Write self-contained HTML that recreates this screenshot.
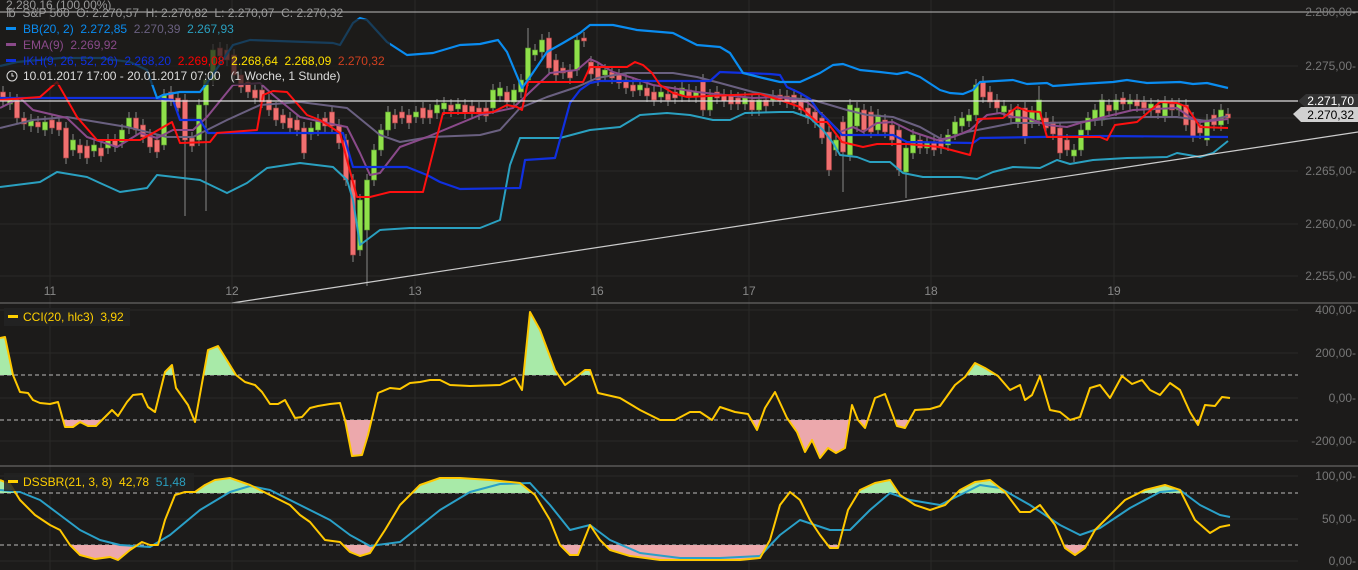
<!DOCTYPE html>
<html><head><meta charset="utf-8">
<style>
html,body{margin:0;padding:0;background:#1c1b1a;width:1358px;height:570px;overflow:hidden;}
svg{display:block;font-family:"Liberation Sans",sans-serif;}
text{white-space:pre;}
.g{fill:#8fe04a;stroke:#5a9a30;stroke-width:.6}
.r{fill:#f07070;stroke:#a04040;stroke-width:.6}
</style></head>
<body>
<svg width="1358" height="570" viewBox="0 0 1358 570" xmlns="http://www.w3.org/2000/svg">
<defs>
<clipPath id="ca"><rect x="0" y="303" width="1300" height="72"/></clipPath>
<clipPath id="cb"><rect x="0" y="420" width="1300" height="46"/></clipPath>
<clipPath id="da"><rect x="0" y="466" width="1300" height="27"/></clipPath>
<clipPath id="db"><rect x="0" y="545" width="1300" height="25"/></clipPath>
</defs>
<rect width="1358" height="570" fill="#1c1b1a"/>
<g stroke="#2a2928" stroke-width="1">
<line x1="50" y1="0" x2="50" y2="570"/><line x1="232" y1="0" x2="232" y2="570"/><line x1="415" y1="0" x2="415" y2="570"/><line x1="597" y1="0" x2="597" y2="570"/><line x1="749" y1="0" x2="749" y2="570"/><line x1="931" y1="0" x2="931" y2="570"/><line x1="1114" y1="0" x2="1114" y2="570"/>
<line x1="0" y1="66" x2="1298" y2="66"/><line x1="0" y1="118" x2="1298" y2="118"/><line x1="0" y1="171" x2="1298" y2="171"/><line x1="0" y1="224" x2="1298" y2="224"/><line x1="0" y1="276" x2="1298" y2="276"/>
<line x1="0" y1="310" x2="1298" y2="310"/><line x1="0" y1="353" x2="1298" y2="353"/><line x1="0" y1="398" x2="1298" y2="398"/><line x1="0" y1="441" x2="1298" y2="441"/>
<line x1="0" y1="476" x2="1298" y2="476"/><line x1="0" y1="519" x2="1298" y2="519"/><line x1="0" y1="561" x2="1298" y2="561"/>
</g>
<line x1="0" y1="12" x2="1358" y2="12" stroke="#bbb" stroke-width="1"/>

<path stroke="#888" stroke-width="1" fill="none" d="M3,86V106M10,92V110M17,94V124M24,112V130M31,114V132M38,116V133M45,116V136M52,114V134M59,116V136M66,122V164M73,134V156M80,139V159M87,140V164M94,139V157M101,142V162M108,134V154M115,134V152M122,124V148M129,112V134M136,112V136M143,119V143M150,129V153M157,134V158M164,89V150M171,86V106M178,92V114M185,94V216M192,132V152M199,99V146M206,74V211M213,44V86M220,42V62M227,44V66M234,49V81M241,69V93M248,76V98M255,84V104M262,84V108M269,94V116M276,102V126M283,109V129M290,112V134M297,114V136M304,122V159M311,122V140M318,114V136M325,112V132M332,106V132M339,119V149M346,134V186M353,174V262M360,194V256M367,174V286M374,144V186M381,124V156M388,106V136M395,109V129M402,106V124M409,109V129M416,106V123M423,102V124M430,104V124M437,99V119M444,97V115M451,99V117M458,98V115M465,99V119M472,100V118M479,102V120M486,102V122M493,84V114M500,82V102M507,86V108M514,84V108M521,74V98M528,28V86M535,44V61M542,34V58M549,32V74M556,54V81M563,62V79M570,64V84M577,34V76M584,32V47M591,56V80M598,62V86M605,64V81M612,66V84M619,69V89M626,74V94M633,79V97M640,79V96M647,82V102M654,86V106M661,86V103M668,88V106M675,86V104M682,82V102M689,84V102M696,86V103M703,74V116M710,89V116M717,86V104M724,89V107M731,90V110M738,92V110M745,92V110M752,94V116M759,94V116M766,94V112M773,90V106M780,89V105M787,90V108M794,89V109M801,94V116M808,102V124M815,106V128M822,112V144M829,126V176M836,134V156M843,116V192M850,99V161M857,102V132M864,104V136M871,106V138M878,109V136M885,114V138M892,119V146M899,124V176M906,142V198M913,129V159M920,134V154M927,136V154M934,136V156M941,134V154M948,129V151M955,116V140M962,112V132M969,109V127M976,79V121M983,76V103M990,86V108M997,94V114M1004,100V118M1011,104V124M1018,104V128M1025,102V144M1032,106V128M1039,86V126M1046,112V134M1053,116V140M1060,122V159M1067,134V156M1074,144V162M1081,124V156M1088,112V136M1095,104V126M1102,94V126M1109,99V117M1116,94V116M1123,92V110M1130,94V110M1137,94V112M1144,96V114M1151,98V116M1158,99V119M1165,96V122M1172,98V116M1179,98V116M1186,99V131M1193,112V142M1200,119V139M1207,114V146M1214,109V131M1221,104V131M1228,108V124"/>
<g>
<rect class="r" x="0.5" y="92" width="5" height="8"/><rect class="g" x="7.5" y="98" width="5" height="6"/><rect class="r" x="14.5" y="100" width="5" height="18"/><rect class="r" x="21.5" y="118" width="5" height="6"/><rect class="g" x="28.5" y="120" width="5" height="6"/><rect class="r" x="35.5" y="122" width="5" height="5"/><rect class="g" x="42.5" y="122" width="5" height="8"/><rect class="r" x="49.5" y="120" width="5" height="8"/><rect class="r" x="56.5" y="122" width="5" height="8"/><rect class="r" x="63.5" y="128" width="5" height="30"/><rect class="g" x="70.5" y="140" width="5" height="10"/><rect class="r" x="77.5" y="145" width="5" height="8"/><rect class="r" x="84.5" y="146" width="5" height="12"/><rect class="g" x="91.5" y="145" width="5" height="6"/><rect class="r" x="98.5" y="148" width="5" height="8"/><rect class="g" x="105.5" y="140" width="5" height="8"/><rect class="r" x="112.5" y="140" width="5" height="6"/><rect class="g" x="119.5" y="130" width="5" height="12"/><rect class="g" x="126.5" y="118" width="5" height="10"/><rect class="r" x="133.5" y="118" width="5" height="12"/><rect class="r" x="140.5" y="125" width="5" height="12"/><rect class="r" x="147.5" y="135" width="5" height="12"/><rect class="r" x="154.5" y="140" width="5" height="12"/><rect class="g" x="161.5" y="95" width="5" height="50"/><rect class="r" x="168.5" y="92" width="5" height="8"/><rect class="r" x="175.5" y="98" width="5" height="10"/><rect class="r" x="182.5" y="100" width="5" height="40"/><rect class="r" x="189.5" y="138" width="5" height="8"/><rect class="g" x="196.5" y="105" width="5" height="35"/><rect class="g" x="203.5" y="80" width="5" height="25"/><rect class="g" x="210.5" y="50" width="5" height="30"/><rect class="r" x="217.5" y="48" width="5" height="8"/><rect class="r" x="224.5" y="50" width="5" height="10"/><rect class="r" x="231.5" y="55" width="5" height="20"/><rect class="r" x="238.5" y="75" width="5" height="12"/><rect class="r" x="245.5" y="82" width="5" height="10"/><rect class="r" x="252.5" y="90" width="5" height="8"/><rect class="r" x="259.5" y="90" width="5" height="12"/><rect class="r" x="266.5" y="100" width="5" height="10"/><rect class="r" x="273.5" y="108" width="5" height="12"/><rect class="r" x="280.5" y="115" width="5" height="8"/><rect class="r" x="287.5" y="118" width="5" height="10"/><rect class="r" x="294.5" y="120" width="5" height="10"/><rect class="r" x="301.5" y="128" width="5" height="25"/><rect class="g" x="308.5" y="128" width="5" height="6"/><rect class="g" x="315.5" y="120" width="5" height="10"/><rect class="r" x="322.5" y="118" width="5" height="8"/><rect class="r" x="329.5" y="112" width="5" height="14"/><rect class="r" x="336.5" y="125" width="5" height="18"/><rect class="r" x="343.5" y="140" width="5" height="40"/><rect class="r" x="350.5" y="180" width="5" height="75"/><rect class="g" x="357.5" y="200" width="5" height="50"/><rect class="g" x="364.5" y="180" width="5" height="50"/><rect class="g" x="371.5" y="150" width="5" height="30"/><rect class="g" x="378.5" y="130" width="5" height="20"/><rect class="g" x="385.5" y="112" width="5" height="18"/><rect class="r" x="392.5" y="115" width="5" height="8"/><rect class="r" x="399.5" y="112" width="5" height="6"/><rect class="r" x="406.5" y="115" width="5" height="8"/><rect class="g" x="413.5" y="112" width="5" height="5"/><rect class="r" x="420.5" y="108" width="5" height="10"/><rect class="r" x="427.5" y="110" width="5" height="8"/><rect class="g" x="434.5" y="105" width="5" height="8"/><rect class="g" x="441.5" y="103" width="5" height="6"/><rect class="r" x="448.5" y="105" width="5" height="6"/><rect class="g" x="455.5" y="104" width="5" height="5"/><rect class="r" x="462.5" y="105" width="5" height="8"/><rect class="r" x="469.5" y="106" width="5" height="6"/><rect class="r" x="476.5" y="108" width="5" height="6"/><rect class="r" x="483.5" y="108" width="5" height="8"/><rect class="g" x="490.5" y="90" width="5" height="18"/><rect class="g" x="497.5" y="88" width="5" height="8"/><rect class="r" x="504.5" y="92" width="5" height="10"/><rect class="g" x="511.5" y="90" width="5" height="12"/><rect class="g" x="518.5" y="80" width="5" height="12"/><rect class="g" x="525.5" y="48" width="5" height="32"/><rect class="g" x="532.5" y="50" width="5" height="5"/><rect class="g" x="539.5" y="40" width="5" height="12"/><rect class="r" x="546.5" y="38" width="5" height="30"/><rect class="r" x="553.5" y="60" width="5" height="15"/><rect class="r" x="560.5" y="68" width="5" height="5"/><rect class="r" x="567.5" y="70" width="5" height="8"/><rect class="g" x="574.5" y="40" width="5" height="30"/><rect class="r" x="581.5" y="38" width="5" height="3"/><rect class="r" x="588.5" y="62" width="5" height="12"/><rect class="r" x="595.5" y="68" width="5" height="12"/><rect class="g" x="602.5" y="70" width="5" height="5"/><rect class="r" x="609.5" y="72" width="5" height="6"/><rect class="r" x="616.5" y="75" width="5" height="8"/><rect class="r" x="623.5" y="80" width="5" height="8"/><rect class="r" x="630.5" y="85" width="5" height="6"/><rect class="g" x="637.5" y="85" width="5" height="5"/><rect class="r" x="644.5" y="88" width="5" height="8"/><rect class="r" x="651.5" y="92" width="5" height="8"/><rect class="g" x="658.5" y="92" width="5" height="5"/><rect class="r" x="665.5" y="94" width="5" height="6"/><rect class="r" x="672.5" y="92" width="5" height="6"/><rect class="g" x="679.5" y="88" width="5" height="8"/><rect class="r" x="686.5" y="90" width="5" height="6"/><rect class="g" x="693.5" y="92" width="5" height="5"/><rect class="r" x="700.5" y="80" width="5" height="30"/><rect class="g" x="707.5" y="95" width="5" height="15"/><rect class="r" x="714.5" y="92" width="5" height="6"/><rect class="r" x="721.5" y="95" width="5" height="6"/><rect class="r" x="728.5" y="96" width="5" height="8"/><rect class="r" x="735.5" y="98" width="5" height="6"/><rect class="g" x="742.5" y="98" width="5" height="6"/><rect class="r" x="749.5" y="100" width="5" height="10"/><rect class="g" x="756.5" y="100" width="5" height="10"/><rect class="r" x="763.5" y="100" width="5" height="6"/><rect class="g" x="770.5" y="96" width="5" height="4"/><rect class="r" x="777.5" y="95" width="5" height="4"/><rect class="r" x="784.5" y="96" width="5" height="6"/><rect class="r" x="791.5" y="95" width="5" height="8"/><rect class="r" x="798.5" y="100" width="5" height="10"/><rect class="r" x="805.5" y="108" width="5" height="10"/><rect class="r" x="812.5" y="112" width="5" height="10"/><rect class="r" x="819.5" y="118" width="5" height="20"/><rect class="r" x="826.5" y="132" width="5" height="38"/><rect class="g" x="833.5" y="140" width="5" height="10"/><rect class="r" x="840.5" y="122" width="5" height="30"/><rect class="g" x="847.5" y="105" width="5" height="50"/><rect class="g" x="854.5" y="108" width="5" height="18"/><rect class="r" x="861.5" y="110" width="5" height="20"/><rect class="r" x="868.5" y="112" width="5" height="20"/><rect class="g" x="875.5" y="115" width="5" height="15"/><rect class="r" x="882.5" y="120" width="5" height="12"/><rect class="r" x="889.5" y="125" width="5" height="15"/><rect class="r" x="896.5" y="130" width="5" height="40"/><rect class="g" x="903.5" y="148" width="5" height="24"/><rect class="g" x="910.5" y="135" width="5" height="18"/><rect class="r" x="917.5" y="140" width="5" height="8"/><rect class="g" x="924.5" y="142" width="5" height="6"/><rect class="r" x="931.5" y="142" width="5" height="8"/><rect class="r" x="938.5" y="140" width="5" height="8"/><rect class="g" x="945.5" y="135" width="5" height="10"/><rect class="g" x="952.5" y="122" width="5" height="12"/><rect class="g" x="959.5" y="118" width="5" height="8"/><rect class="g" x="966.5" y="115" width="5" height="6"/><rect class="g" x="973.5" y="85" width="5" height="30"/><rect class="r" x="980.5" y="82" width="5" height="15"/><rect class="r" x="987.5" y="92" width="5" height="10"/><rect class="r" x="994.5" y="100" width="5" height="8"/><rect class="g" x="1001.5" y="106" width="5" height="6"/><rect class="r" x="1008.5" y="110" width="5" height="8"/><rect class="g" x="1015.5" y="110" width="5" height="12"/><rect class="r" x="1022.5" y="108" width="5" height="30"/><rect class="g" x="1029.5" y="112" width="5" height="10"/><rect class="g" x="1036.5" y="100" width="5" height="20"/><rect class="r" x="1043.5" y="118" width="5" height="10"/><rect class="r" x="1050.5" y="122" width="5" height="12"/><rect class="r" x="1057.5" y="128" width="5" height="25"/><rect class="r" x="1064.5" y="140" width="5" height="10"/><rect class="g" x="1071.5" y="150" width="5" height="6"/><rect class="g" x="1078.5" y="130" width="5" height="20"/><rect class="g" x="1085.5" y="118" width="5" height="12"/><rect class="g" x="1092.5" y="110" width="5" height="10"/><rect class="g" x="1099.5" y="100" width="5" height="20"/><rect class="r" x="1106.5" y="105" width="5" height="6"/><rect class="g" x="1113.5" y="100" width="5" height="10"/><rect class="r" x="1120.5" y="98" width="5" height="6"/><rect class="g" x="1127.5" y="100" width="5" height="4"/><rect class="r" x="1134.5" y="100" width="5" height="6"/><rect class="r" x="1141.5" y="102" width="5" height="6"/><rect class="g" x="1148.5" y="104" width="5" height="6"/><rect class="r" x="1155.5" y="105" width="5" height="8"/><rect class="g" x="1162.5" y="102" width="5" height="14"/><rect class="r" x="1169.5" y="104" width="5" height="6"/><rect class="g" x="1176.5" y="104" width="5" height="6"/><rect class="r" x="1183.5" y="105" width="5" height="20"/><rect class="r" x="1190.5" y="118" width="5" height="18"/><rect class="r" x="1197.5" y="125" width="5" height="8"/><rect class="g" x="1204.5" y="120" width="5" height="20"/><rect class="r" x="1211.5" y="115" width="5" height="10"/><rect class="g" x="1218.5" y="110" width="5" height="15"/><rect class="r" x="1225.5" y="114" width="5" height="4"/>
</g>

<g fill="none" stroke-linejoin="round">
<polyline stroke="#2aa0c0" stroke-width="2" points="0,187 40,182 57,172 87,177 100,183 120,192 147,188 157,175 200,180 227,193 247,183 267,168 300,163 333,167 347,180 353,200 360,245 380,230 410,228 480,228 500,220 510,165 520,138 560,138 590,130 620,127 640,115 667,113 690,115 713,120 730,120 745,113 780,112 793,112 810,118 823,130 833,143 840,155 857,157 870,162 890,162 903,173 923,177 960,177 977,179 993,172 1013,167 1040,168 1057,160 1070,164 1093,160 1127,158 1167,157 1177,153 1200,157 1213,153 1228,141"/>
<polyline stroke="#6a6080" stroke-width="2" points="0,128 33,120 67,117 127,127 167,137 193,137 227,120 260,105 300,102 347,108 380,135 400,142 430,137 480,135 500,130 520,108 547,97 577,87 597,78 627,73 673,73 697,77 720,83 753,92 780,97 813,100 847,110 867,115 893,117 920,127 943,140 967,132 993,127 1013,123 1047,123 1080,122 1113,118 1147,117 1177,117 1207,121 1228,116"/>
<polyline stroke="#8a4a8a" stroke-width="2" points="0,108 20,98 33,110 67,118 87,137 117,147 140,133 157,138 173,130 193,130 207,117 233,85 260,83 273,95 300,117 327,123 347,127 360,153 370,175 380,173 400,147 427,137 480,115 513,108 530,92 550,73 577,70 590,59 597,62 613,72 633,78 653,85 697,92 753,98 780,97 807,102 823,115 840,132 853,127 863,132 877,123 893,122 913,132 937,140 953,137 970,130 987,115 1000,113 1013,117 1027,118 1047,125 1067,127 1080,123 1100,118 1133,110 1177,108 1190,117 1200,122 1228,119"/>
<polyline stroke="#1030e0" stroke-width="2.2" points="0,98 153,98 173,100 180,120 200,120 208,133 343,133 353,167 407,167 427,175 440,182 460,189 520,188 525,160 555,158 570,103 580,90 590,83 600,81 710,81 720,72 770,74 780,75 787,87 800,93 810,99 820,113 830,122 842,135 893,135 907,142 973,143 980,138 1100,136 1228,137"/>
<polyline stroke="#ff1010" stroke-width="2" points="0,100 40,97 57,82 77,117 97,140 140,140 153,133 172,122 180,143 210,142 217,133 257,130 263,95 273,91 287,92 307,115 320,120 340,133 347,160 357,197 370,197 390,192 423,192 443,113 480,113 493,112 507,105 517,107 522,110 528,82 583,82 590,67 627,67 635,62 643,65 652,73 660,85 673,93 687,97 733,95 760,94 780,100 800,107 817,122 827,122 842,142 863,147 877,144 907,144 940,147 970,155 978,119 1003,118 1017,107 1027,111 1040,112 1047,137 1100,137 1107,140 1115,125 1137,122 1160,102 1177,103 1187,107 1200,127 1228,128"/>
<polyline stroke="#0a8cf0" stroke-width="2.2" points="0,66 17,62 60,58 100,58 130,62 147,70 157,98 163,95 180,92 200,92 207,83 233,45 250,40 333,43 340,45 353,23 360,18 367,20 387,42 407,55 433,53 460,45 480,44 498,40 507,52 522,88 530,77 547,52 563,43 580,33 590,25 613,25 637,30 673,33 697,45 720,47 730,53 743,73 763,78 780,82 800,82 820,73 833,65 843,64 860,70 880,72 897,74 907,72 920,77 940,90 950,93 963,94 973,90 980,82 1013,80 1027,84 1047,83 1053,86 1080,84 1113,82 1127,80 1147,83 1180,82 1193,84 1207,83 1228,88"/>
</g>

<line x1="0" y1="101" x2="1298" y2="101" stroke="#ddd" stroke-width="1.2"/>
<line x1="232" y1="303" x2="1358" y2="132" stroke="#ccc" stroke-width="1.2"/>
<g fill="#888" font-size="12" text-anchor="middle">
<text x="50" y="295">11</text><text x="232" y="295">12</text><text x="415" y="295">13</text><text x="597" y="295">16</text><text x="749" y="295">17</text><text x="931" y="295">18</text><text x="1114" y="295">19</text>
</g>
<line x1="0" y1="303" x2="1358" y2="303" stroke="#777"/>
<line x1="0" y1="466" x2="1358" y2="466" stroke="#777"/>
<g stroke="#bbb" stroke-dasharray="4,3" stroke-width="1">
<line x1="0" y1="375" x2="1298" y2="375"/><line x1="0" y1="420" x2="1298" y2="420"/>
<line x1="0" y1="493" x2="1298" y2="493"/><line x1="0" y1="545" x2="1298" y2="545"/>
</g>

<path clip-path="url(#ca)" fill="#a8eaa8" d="M0,375 L0,338 5,337 13,375 20,392 28,393 33,400 40,403 50,404 58,402 65,427 73,427 80,422 88,426 96,426 105,417 112,410 118,416 127,402 133,395 142,394 148,407 155,412 165,372 172,365 176,388 188,405 195,422 208,350 218,346 228,362 236,375 245,382 255,385 262,392 270,404 278,404 285,400 295,418 302,417 310,408 318,406 330,404 340,403 345,420 352,456 362,455 368,435 378,393 390,388 400,389 410,383 420,382 430,380 440,380 450,385 470,386 500,385 515,378 522,390 530,312 540,330 555,370 565,385 575,378 585,370 590,370 598,393 620,398 640,410 660,420 675,420 690,412 700,412 712,420 720,407 735,412 748,414 757,430 765,408 775,392 787,418 797,432 805,452 812,440 820,458 828,448 836,453 845,448 852,405 858,420 865,428 875,398 885,394 897,426 905,428 915,410 930,409 940,406 955,385 965,377 975,363 985,368 998,376 1010,390 1020,385 1025,400 1032,395 1040,376 1050,410 1060,412 1070,420 1080,417 1090,388 1100,385 1110,398 1122,376 1132,384 1142,380 1150,390 1160,395 1170,383 1180,390 1190,412 1198,425 1205,405 1215,406 1222,397 1230,398 L1230,375Z"/>
<path clip-path="url(#cb)" fill="#eca8ac" d="M0,420 L0,338 5,337 13,375 20,392 28,393 33,400 40,403 50,404 58,402 65,427 73,427 80,422 88,426 96,426 105,417 112,410 118,416 127,402 133,395 142,394 148,407 155,412 165,372 172,365 176,388 188,405 195,422 208,350 218,346 228,362 236,375 245,382 255,385 262,392 270,404 278,404 285,400 295,418 302,417 310,408 318,406 330,404 340,403 345,420 352,456 362,455 368,435 378,393 390,388 400,389 410,383 420,382 430,380 440,380 450,385 470,386 500,385 515,378 522,390 530,312 540,330 555,370 565,385 575,378 585,370 590,370 598,393 620,398 640,410 660,420 675,420 690,412 700,412 712,420 720,407 735,412 748,414 757,430 765,408 775,392 787,418 797,432 805,452 812,440 820,458 828,448 836,453 845,448 852,405 858,420 865,428 875,398 885,394 897,426 905,428 915,410 930,409 940,406 955,385 965,377 975,363 985,368 998,376 1010,390 1020,385 1025,400 1032,395 1040,376 1050,410 1060,412 1070,420 1080,417 1090,388 1100,385 1110,398 1122,376 1132,384 1142,380 1150,390 1160,395 1170,383 1180,390 1190,412 1198,425 1205,405 1215,406 1222,397 1230,398 L1230,420Z"/>
<polyline fill="none" stroke="#ffc800" stroke-width="2" stroke-linejoin="round" points="0,338 5,337 13,375 20,392 28,393 33,400 40,403 50,404 58,402 65,427 73,427 80,422 88,426 96,426 105,417 112,410 118,416 127,402 133,395 142,394 148,407 155,412 165,372 172,365 176,388 188,405 195,422 208,350 218,346 228,362 236,375 245,382 255,385 262,392 270,404 278,404 285,400 295,418 302,417 310,408 318,406 330,404 340,403 345,420 352,456 362,455 368,435 378,393 390,388 400,389 410,383 420,382 430,380 440,380 450,385 470,386 500,385 515,378 522,390 530,312 540,330 555,370 565,385 575,378 585,370 590,370 598,393 620,398 640,410 660,420 675,420 690,412 700,412 712,420 720,407 735,412 748,414 757,430 765,408 775,392 787,418 797,432 805,452 812,440 820,458 828,448 836,453 845,448 852,405 858,420 865,428 875,398 885,394 897,426 905,428 915,410 930,409 940,406 955,385 965,377 975,363 985,368 998,376 1010,390 1020,385 1025,400 1032,395 1040,376 1050,410 1060,412 1070,420 1080,417 1090,388 1100,385 1110,398 1122,376 1132,384 1142,380 1150,390 1160,395 1170,383 1180,390 1190,412 1198,425 1205,405 1215,406 1222,397 1230,398"/>

<path clip-path="url(#da)" fill="#a8eaa8" d="M0,493 L0,480 10,484 20,500 35,515 50,525 60,530 70,545 80,555 95,559 110,557 118,560 130,550 142,542 150,545 158,545 165,520 175,495 185,492 195,492 205,485 215,480 230,478 250,485 270,495 290,505 300,515 310,522 325,540 340,542 350,552 360,556 370,553 385,530 400,505 420,485 440,478 460,478 490,480 520,483 535,495 550,520 560,545 570,555 578,555 590,525 600,540 610,550 630,556 660,560 700,560 740,560 760,558 770,540 780,505 790,492 800,500 810,520 820,535 830,548 838,548 848,510 860,490 875,483 890,480 900,495 915,505 930,510 945,505 960,490 975,482 990,480 1005,492 1020,512 1030,512 1040,505 1055,525 1065,548 1075,555 1085,548 1095,530 1110,515 1125,500 1145,490 1165,485 1180,490 1195,520 1210,533 1220,527 1230,525 L1230,493Z"/>
<path clip-path="url(#db)" fill="#eca8ac" d="M0,545 L0,480 10,484 20,500 35,515 50,525 60,530 70,545 80,555 95,559 110,557 118,560 130,550 142,542 150,545 158,545 165,520 175,495 185,492 195,492 205,485 215,480 230,478 250,485 270,495 290,505 300,515 310,522 325,540 340,542 350,552 360,556 370,553 385,530 400,505 420,485 440,478 460,478 490,480 520,483 535,495 550,520 560,545 570,555 578,555 590,525 600,540 610,550 630,556 660,560 700,560 740,560 760,558 770,540 780,505 790,492 800,500 810,520 820,535 830,548 838,548 848,510 860,490 875,483 890,480 900,495 915,505 930,510 945,505 960,490 975,482 990,480 1005,492 1020,512 1030,512 1040,505 1055,525 1065,548 1075,555 1085,548 1095,530 1110,515 1125,500 1145,490 1165,485 1180,490 1195,520 1210,533 1220,527 1230,525 L1230,545Z"/>
<polyline fill="none" stroke="#2aa0c8" stroke-width="2" stroke-linejoin="round" points="0,490 20,492 40,500 60,515 80,530 100,540 120,545 150,547 170,535 200,510 230,492 250,486 270,490 300,505 330,520 350,535 370,546 400,542 440,510 470,492 500,484 530,483 550,505 570,530 590,525 610,540 640,553 680,558 720,558 760,556 780,535 800,520 830,530 850,530 870,510 890,493 910,500 940,505 960,495 980,485 1000,488 1030,505 1060,525 1080,535 1100,528 1130,508 1160,492 1180,490 1200,505 1220,515 1230,517"/>
<polyline fill="none" stroke="#ffc800" stroke-width="2" stroke-linejoin="round" points="0,480 10,484 20,500 35,515 50,525 60,530 70,545 80,555 95,559 110,557 118,560 130,550 142,542 150,545 158,545 165,520 175,495 185,492 195,492 205,485 215,480 230,478 250,485 270,495 290,505 300,515 310,522 325,540 340,542 350,552 360,556 370,553 385,530 400,505 420,485 440,478 460,478 490,480 520,483 535,495 550,520 560,545 570,555 578,555 590,525 600,540 610,550 630,556 660,560 700,560 740,560 760,558 770,540 780,505 790,492 800,500 810,520 820,535 830,548 838,548 848,510 860,490 875,483 890,480 900,495 915,505 930,510 945,505 960,490 975,482 990,480 1005,492 1020,512 1030,512 1040,505 1055,525 1065,548 1075,555 1085,548 1095,530 1110,515 1125,500 1145,490 1165,485 1180,490 1195,520 1210,533 1220,527 1230,525"/>

<g fill="#777" font-size="12" text-anchor="end">
<text x="1356" y="16">2.280,00-</text><text x="1356" y="70">2.275,00-</text><text x="1356" y="175">2.265,00-</text><text x="1356" y="228">2.260,00-</text><text x="1356" y="280">2.255,00-</text>
<text x="1356" y="314">400,00-</text><text x="1356" y="357">200,00-</text><text x="1356" y="402">0,00-</text><text x="1356" y="445">-200,00-</text>
<text x="1356" y="480">100,00-</text><text x="1356" y="523">50,00-</text><text x="1356" y="565">0,00-</text>
</g>
<path d="M1298,101 L1306,94 L1358,94 L1358,108 L1306,108 Z" fill="#333"/>
<text x="1354" y="105" fill="#fff" font-size="12" text-anchor="end">2.271,70</text>
<path d="M1293,114 L1301,107 L1358,107 L1358,122 L1301,122 Z" fill="#d0d0d0"/>
<text x="1354" y="119" fill="#000" font-size="12" text-anchor="end">2.270,32</text>

<rect x="0" y="19" width="390" height="66" fill="#1c1b1a" opacity="0.7"/>
<g font-size="12">
<text x="6" y="9" fill="#999">2.280,16 (100,00%)</text>
<text x="6" y="17" fill="#999">℔  S&amp;P 500  O: 2.270,57  H: 2.270,82  L: 2.270,07  C: 2.270,32</text>
<rect x="6" y="27" width="10" height="3" fill="#0a8cf0"/>
<text x="23" y="33" fill="#0a8cf0">BB(20, 2)  2.272,85  <tspan fill="#6a6080">2.270,39</tspan>  <tspan fill="#2aa0c0">2.267,93</tspan></text>
<rect x="6" y="43" width="10" height="3" fill="#8a4a8a"/>
<text x="23" y="49" fill="#8a4a8a">EMA(9)  2.269,92</text>
<rect x="6" y="59" width="10" height="3" fill="#1030e0"/>
<text x="23" y="65" fill="#1030e0">IKH(9, 26, 52, 26)  2.268,20  <tspan fill="#f00">2.269,08</tspan>  <tspan fill="#ffe000">2.268,64  2.268,09</tspan>  <tspan fill="#d04020">2.270,32</tspan></text>
<circle cx="12" cy="76" r="5" fill="none" stroke="#ddd"/><path d="M12,73 V76 H14" stroke="#ddd" fill="none"/>
<text x="23" y="80" fill="#ddd">10.01.2017 17:00 - 20.01.2017 07:00   (1 Woche, 1 Stunde)</text>
<rect x="4" y="308" width="126" height="18" fill="#222"/>
<rect x="8" y="315" width="10" height="3" fill="#ffd000"/>
<text x="23" y="321" fill="#ffd000">CCI(20, hlc3)  3,92</text>
<rect x="4" y="473" width="190" height="18" fill="#222" opacity="0.85"/>
<rect x="8" y="480" width="10" height="3" fill="#ffd000"/>
<text x="23" y="486" fill="#ffd000">DSSBR(21, 3, 8)  42,78  <tspan fill="#2aa0c0">51,48</tspan></text>
</g>
</svg>
</body></html>
